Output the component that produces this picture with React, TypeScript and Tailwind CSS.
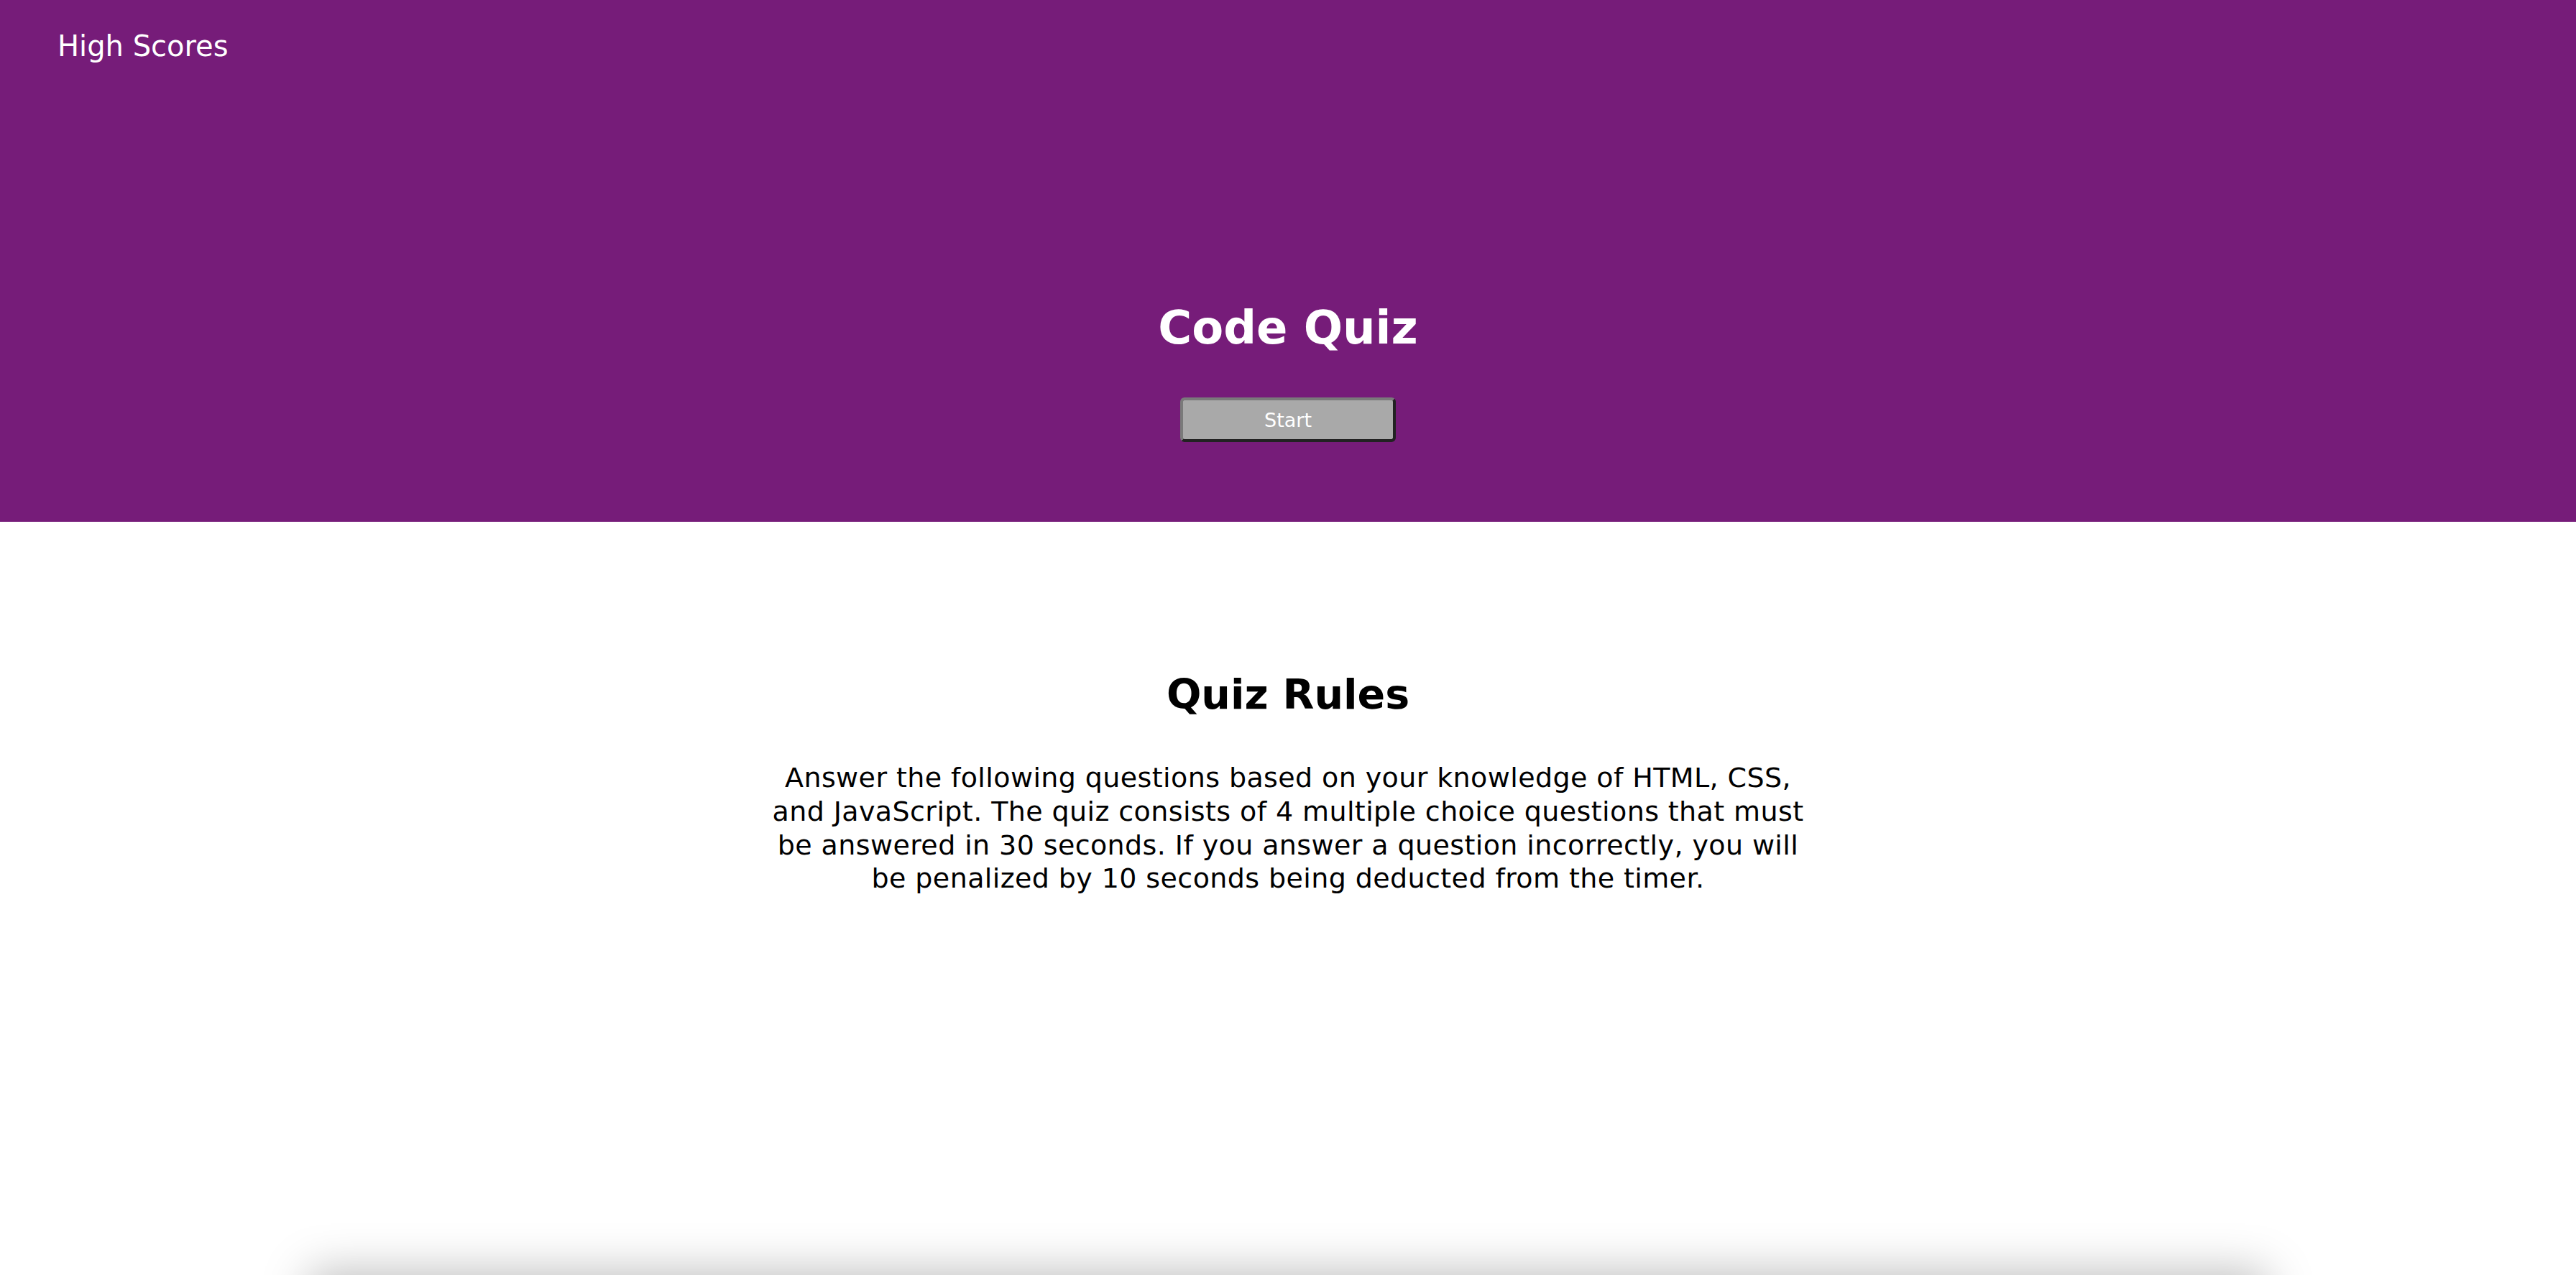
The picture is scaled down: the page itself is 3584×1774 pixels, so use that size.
export default function App() {
  return (
    <div className="h-[1774px] overflow-hidden bg-white font-['DejaVu_Sans',Verdana,sans-serif]">
      <header className="h-[726px] bg-[#761c79] text-white">
        <div className="pl-[80px] pt-[44px] text-[40px] leading-none">High Scores</div>
        <div className="mt-[340px] flex flex-col items-center">
          <h1 className="text-[64px] font-bold leading-none">Code Quiz</h1>
          <button className="mt-[65px] h-[62px] w-[300px] rounded-[6px] border-4 border-t-[#7a7a7a] border-l-[#7a7a7a] border-b-[#222] border-r-[#222] bg-[#a9a9a9] pt-[2px] text-[27px] text-white">
            Start
          </button>
        </div>
      </header>

      <main className="flex flex-col items-center pt-[212px]">
        <h2 className="text-[57px] font-bold leading-none text-black">Quiz Rules</h2>
        <p className="mt-[64px] max-w-[1470px] text-center text-[38px] leading-[46.8px] tracking-[0.4px] text-black">
          Answer the following questions based on your knowledge of HTML, CSS, and JavaScript. The quiz
          consists of 4 multiple choice questions that must be answered in 30 seconds. If you answer a
          question incorrectly, you will be penalized by 10 seconds being deducted from the timer.
        </p>
      </main>

      <section className="mx-auto mt-[535px] h-[400px] w-[2700px] bg-white shadow-[0_0_60px_12px_rgba(0,0,0,0.26)]" />
    </div>
  );
}
